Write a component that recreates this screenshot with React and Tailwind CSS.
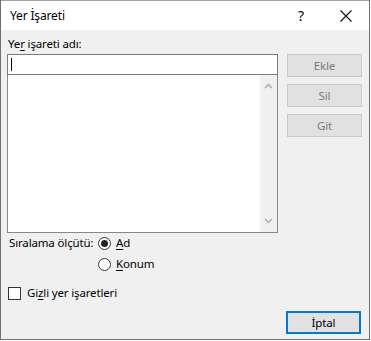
import React from "react";

const FONT = { fontFamily: '"Noto Sans", "Segoe UI", sans-serif' };

const Key = ({ children }) => <span className="underline underline-offset-2">{children}</span>;

const DialogButton = ({ children, disabled, primary }) => (
  <button
    className={`w-[75px] h-[23px] text-[11.5px] leading-none flex items-center justify-center ${
      primary
        ? "border-2 border-[#0078d7] bg-[#e1e1e1] text-black"
        : "border border-[#c9c9c9] bg-[#e1e1e1] text-[#7d7d7d]"
    }`}
    disabled={disabled}
  >
    {children}
  </button>
);

const Chevron = ({ up }) => (
  <svg width="9" height="6" viewBox="0 0 9 6">
    <path
      d={up ? "M1 5 L4.5 1.5 L8 5" : "M1 1 L4.5 4.5 L8 1"}
      fill="none"
      stroke="#a8a8a8"
      strokeWidth="1.3"
    />
  </svg>
);

export default function App() {
  return (
    <div
      className="w-[370px] h-[340px] flex flex-col border border-t-0 border-[#6f6f6f] bg-[#f0f0f0] text-[11.5px] tracking-[-0.15px] text-black"
      style={FONT}
    >
      {/* Title bar */}
      <div className="h-[30px] bg-white flex items-center pl-[9px] border-t border-[#a0a0a0]">
        <span className="flex-1 text-[12px]">Yer İşareti</span>
        <span className="w-[46px] text-center text-[14px] mr-[-1px]">?</span>
        <span className="w-[46px] h-[29px] flex items-center justify-center">
          <svg width="12" height="12" viewBox="0 0 12 12">
            <path d="M0.5 0.5 L11.5 11.5 M11.5 0.5 L0.5 11.5" stroke="#111" strokeWidth="1.1" />
          </svg>
        </span>
      </div>

      {/* Body */}
      <div className="flex-1 flex flex-col pl-[6px] pr-[7px]">
        <div className="flex">
          <div className="w-[272px] flex flex-col">
            <div className="h-[16px] mt-[6px] leading-[16px] pl-[1px]">
              Ye<Key>r</Key> işareti adı:
            </div>
            <div className="mt-[2px] h-[21px] bg-white border border-[#7a7a7a] flex items-center pl-[3px]">
              <div className="w-px h-[13px] bg-black" />
            </div>
            <div className="h-[158px] bg-white border border-t-0 border-[#828790] flex justify-end">
              <div className="w-[17px] bg-[#f0f0f0] flex flex-col items-center justify-between py-[8px]">
                <Chevron up />
                <Chevron />
              </div>
            </div>
          </div>
          <div className="ml-[9px] mt-[24px] flex flex-col gap-[7px]">
            <DialogButton disabled>Ekle</DialogButton>
            <DialogButton disabled>Sil</DialogButton>
            <DialogButton disabled>Git</DialogButton>
          </div>
        </div>

        {/* Sort options */}
        <div className="flex mt-[2px]">
          <div className="w-[91px] pl-[2px] leading-[16px] whitespace-nowrap">Sıralama ölçütü:</div>
          <div className="flex flex-col gap-[5px]">
            <label className="flex items-center gap-[5px] h-[16px]">
              <span className="w-[13px] h-[13px] rounded-full border border-[#333] bg-white flex items-center justify-center">
                <span className="w-[7px] h-[7px] rounded-full bg-[#222]" />
              </span>
              <span><Key>A</Key>d</span>
            </label>
            <label className="flex items-center gap-[5px] h-[16px]">
              <span className="w-[13px] h-[13px] rounded-full border border-[#333] bg-white" />
              <span><Key>K</Key>onum</span>
            </label>
          </div>
        </div>

        {/* Hidden bookmarks */}
        <label className="flex items-center gap-[6px] mt-[13px] pl-[1px] h-[16px]">
          <span className="w-[13px] h-[13px] border border-[#333] bg-white" />
          <span>Gi<Key>z</Key>li yer işaretleri</span>
        </label>

        <div className="flex justify-end mt-[10px] pr-[1px]">
          <DialogButton primary>İptal</DialogButton>
        </div>
      </div>
    </div>
  );
}
